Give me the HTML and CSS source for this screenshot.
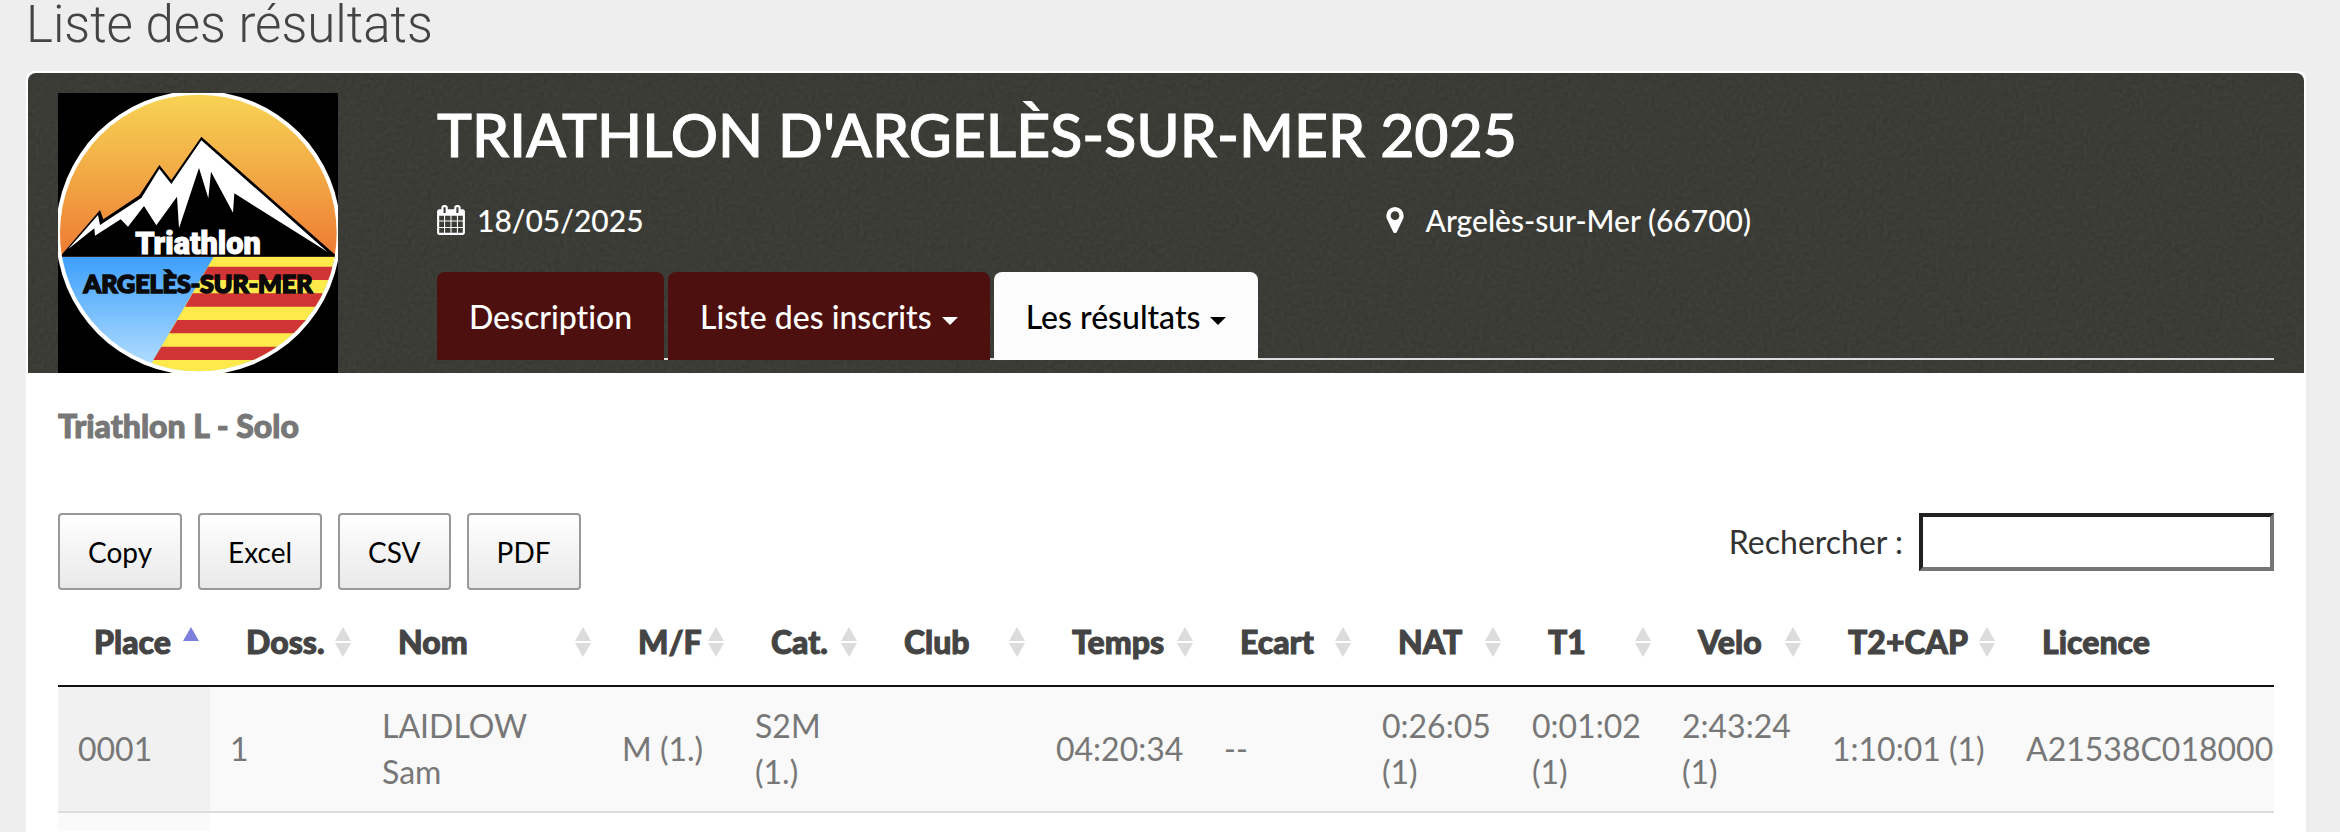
FILE: index.html
```
<!DOCTYPE html>
<html lang="fr">
<head>
    <meta charset="UTF-8">
    <meta name="viewport" content="width=device-width, initial-scale=1.0">
    <title>Liste des résultats</title>
    <link rel="stylesheet" href="styles.css">
</head>
<body>
    <h1 class="page-title">Liste des résultats</h1>

    <main class="panel">
        <!-- Bandeau de l'épreuve -->
        <header class="banner">
            <svg class="grain" aria-hidden="true">
                <filter id="noise">
                    <feTurbulence type="fractalNoise" baseFrequency="0.25" numOctaves="3"/>
                    <feColorMatrix type="matrix" values="0 0 0 0 0  0 0 0 0 0  0 0 0 0 0  0.5 0.5 0 0 -0.3"/>
                </filter>
                <rect width="100%" height="100%" filter="url(#noise)"/>
            </svg>

            <svg class="event-logo" viewBox="54 69 840 840" role="img" aria-label="Logo Triathlon Argelès-sur-Mer">
                <defs>
                    <linearGradient id="sky" x1="0" y1="0" x2="0" y2="1">
                        <stop offset="0" stop-color="#f8d454"/>
                        <stop offset="0.5" stop-color="#f2a945"/>
                        <stop offset="1" stop-color="#ee7a33"/>
                    </linearGradient>
                    <linearGradient id="sea" x1="0" y1="0" x2="0" y2="1">
                        <stop offset="0" stop-color="#3d9ffb"/>
                        <stop offset="1" stop-color="#b9e1ff"/>
                    </linearGradient>
                    <clipPath id="disc"><circle cx="475" cy="489" r="415"/></clipPath>
                </defs>
                <rect x="54" y="69" width="840" height="840" fill="#000"/>
                <circle cx="475" cy="489" r="427" fill="#fff"/>
                <g clip-path="url(#disc)">
                    <rect x="54" y="69" width="840" height="492" fill="url(#sky)"/>
                    <rect x="54" y="560" width="840" height="349" fill="url(#sea)"/>
                    <path d="M521 560H900V920H312z" fill="#feea4b"/>
                    <path d="M504 590H900V630H481zM458 670H900V710H435zM412 750H900V790H388zM364 830H900V870H340z" fill="#d13434"/>
                    <path d="M60 560L180 420L190 448L298 376L358 285L394 330L484 200L892 560z" fill="#000"/>
                    <path d="M84 538L174 435L180 465L304 384L358 296L394 342L484 211L862 545L583 370L579 428L513 305L505 385L477 294L417 475L411 380L349 466L312 408L264 470L242 448L165 497L163 475z" fill="#fff"/>
                </g>
                <text class="logo-name" x="474" y="551" text-anchor="middle">Triathlon</text>
                <text class="logo-city" x="474" y="668" text-anchor="middle">ARGELÈS-SUR-MER</text>
            </svg>

            <div class="event">
                <h2>TRIATHLON D'ARGELÈS-SUR-MER 2025</h2>
                <div class="event-info">
                    <p>
                        <svg class="icon-calendar" viewBox="0 0 1664 1792" aria-hidden="true"><path fill="#fff" d="M128 1664h288v-288H128v288zm352 0h320v-288H480v288zM128 1312h288V992H128v320zm352 0h320V992H480v320zM128 928h288V640H128v288zm736 736h320v-288H864v288zM480 928h320V640H480v288zm768 736h288v-288h-288v288zm-384-352h320V992H864v320zM512 448V160q0-13-9.500-22.500T480 128h-64q-13 0-22.500 9.500T384 160v288q0 13 9.500 22.500T416 480h64q13 0 22.500-9.500T512 448zm736 864h288V992h-288v320zM864 928h320V640H864v288zm384 0h288V640h-288v288zm32-480V160q0-13-9.500-22.500T1248 128h-64q-13 0-22.500 9.500T1152 160v288q0 13 9.500 22.500t22.500 9.500h64q13 0 22.500-9.500t9.500-22.500zm384-64v1280q0 52-38 90t-90 38H128q-52 0-90-38t-38-90V384q0-52 38-90t90-38h128v-96q0-66 47-113T416 0h64q66 0 113 47t47 113v96h384v-96q0-66 47-113t113-47h64q66 0 113 47t47 113v96h128q52 0 90 38t38 90z"/></svg>
                        18/05/2025
                    </p>
                    <p>
                        <svg class="icon-marker" viewBox="0 0 1024 1536" aria-hidden="true"><path fill="#fff" d="M768 512q0-106-75-181t-181-75-181 75-75 181 75 181 181 75 181-75 75-181zm256 0q0 109-33 179l-364 774q-16 33-47.500 52t-67.500 19-67.500-19-46.500-52L33 691Q0 621 0 512q0-212 150-362T512 0t362 150 150 362z"/></svg>
                        Argelès-sur-Mer (66700)
                    </p>
                </div>
                <nav class="tabs">
                    <a href="#description">Description</a>
                    <a href="#inscrits">Liste des inscrits <span class="caret"></span></a>
                    <a href="#resultats" class="active">Les résultats <span class="caret"></span></a>
                </nav>
            </div>
        </header>

        <!-- Résultats -->
        <section class="results" id="resultats">
            <h3>Triathlon L - Solo</h3>

            <div class="toolbar">
                <div class="buttons">
                    <button type="button">Copy</button>
                    <button type="button">Excel</button>
                    <button type="button">CSV</button>
                    <button type="button">PDF</button>
                </div>
                <div class="search">
                    <label for="search">Rechercher :</label>
                    <input type="search" id="search">
                </div>
            </div>

            <div class="table-wrap">
                <table>
                    <colgroup>
                        <col class="w-place">
                        <col class="w-place">
                        <col class="w-nom">
                        <col class="w-cat">
                        <col class="w-cat">
                        <col class="w-temps">
                        <col class="w-temps">
                        <col class="w-ecart">
                        <col class="w-split">
                        <col class="w-split">
                        <col class="w-split">
                        <col class="w-cap">
                        <col class="w-licence">
                    </colgroup>
                    <thead>
                        <tr>
                            <th class="asc">Place</th>
                            <th>Doss.</th>
                            <th>Nom</th>
                            <th>M/F</th>
                            <th>Cat.</th>
                            <th>Club</th>
                            <th>Temps</th>
                            <th>Ecart</th>
                            <th>NAT</th>
                            <th>T1</th>
                            <th>Velo</th>
                            <th>T2+CAP</th>
                            <th>Licence</th>
                        </tr>
                    </thead>
                    <tbody>
                        <tr>
                            <td>0001</td>
                            <td>1</td>
                            <td>LAIDLOW<br>Sam</td>
                            <td>M (1.)</td>
                            <td>S2M<br>(1.)</td>
                            <td></td>
                            <td>04:20:34</td>
                            <td>--</td>
                            <td>0:26:05<br>(1)</td>
                            <td>0:01:02<br>(1)</td>
                            <td>2:43:24<br>(1)</td>
                            <td>1:10:01 (1)</td>
                            <td>A21538C018000</td>
                        </tr>
                        <tr>
                            <td></td><td></td><td></td><td></td><td></td><td></td><td></td>
                            <td></td><td></td><td></td><td></td><td></td><td></td>
                        </tr>
                    </tbody>
                </table>
            </div>
        </section>
    </main>
</body>
</html>
```
FILE: styles.css
```
* {
    margin: 0;
    padding: 0;
    box-sizing: border-box;
}

body {
    display: flex;
    flex-direction: column;
    min-height: 100vh;
    background-color: #eee;
    font-family: Lato, sans-serif;
    font-size: 32px;
    font-variant-ligatures: none;
    line-height: 46px;
    color: #777;
}

.page-title {
    padding: 0 26px;
    margin-bottom: 21px;
    font-family: Roboto, sans-serif;
    font-size: 51px;
    font-weight: 300;
    line-height: 50px;
    color: #444;
}

.panel {
    flex: 1;
    margin: 0 34px 0 26px;
    border: 2px solid #fff;
    border-bottom: 0;
    border-radius: 8px 8px 0 0;
    background-color: #fff;
}

/* Bandeau */
.banner {
    position: relative;
    display: flex;
    gap: 99px;
    padding: 20px 30px 0;
    border-radius: 8px 8px 0 0;
    background-color: #3f403a;
    color: #fff;
    overflow: hidden;
}

.grain {
    position: absolute;
    inset: 0;
    width: 100%;
    height: 100%;
    opacity: 0.3;
}

.event-logo {
    position: relative;
    flex: none;
    width: 280px;
    height: 280px;
}

.logo-name {
    font-family: Roboto, sans-serif;
    font-size: 92px;
    font-weight: 900;
    fill: #fff;
    stroke: #fff;
    stroke-width: 3px;
}

.logo-city {
    font-size: 75px;
    font-weight: 900;
    fill: #0a0a0a;
    stroke: #0a0a0a;
    stroke-width: 5px;
}

.event {
    position: relative;
    flex: 1;
}

.event h2 {
    margin: 6px 0 26px;
    font-size: 59px;
    font-weight: 500;
    line-height: 72px;
    -webkit-text-stroke: 1px;
}

.event-info {
    display: grid;
    grid-template-columns: 1fr 1fr;
    gap: 60px;
    margin-bottom: 29px;
    font-size: 30px;
    font-weight: 500;
}

.event-info p {
    display: flex;
    align-items: center;
    gap: 12px;
}

.icon-calendar {
    width: 28px;
    height: 30px;
}

.icon-marker {
    width: 18px;
    height: 26px;
    margin-right: 10px;
}

.tabs {
    display: flex;
    gap: 4px;
    height: 88px;
    box-shadow: inset 0 -2px #ddd;
}

.tabs a {
    padding: 22px 32px 20px;
    border-radius: 8px 8px 0 0;
    background-color: #4e100e;
    color: #fff;
    font-size: 32px;
    font-weight: 500;
    text-decoration: none;
}

.tabs a.active {
    background-color: #fcfcfc;
    color: #000;
}

.caret {
    display: inline-block;
    margin-left: 2px;
    border: 8px solid transparent;
    border-top-color: currentColor;
    border-bottom: 0;
    vertical-align: middle;
}

/* Résultats */
.results {
    padding: 30px 30px 0;
}

.results h3 {
    margin-bottom: 64px;
    font-size: 32px;
    font-weight: 900;
    -webkit-text-stroke: 1px;
}

.toolbar {
    display: flex;
    justify-content: space-between;
    align-items: flex-start;
    margin-bottom: 9px;
}

.buttons {
    display: flex;
    gap: 16px;
}

.buttons button {
    height: 77px;
    padding: 0 28px;
    border: 2px solid #999;
    border-radius: 4px;
    background: linear-gradient(#fff, #e9e9e9);
    font-family: inherit;
    font-size: 28px;
    color: #000;
}

.search {
    display: flex;
    align-items: center;
    gap: 16px;
    color: #333;
}

.search input {
    width: 355px;
    height: 58px;
    border: 4px inset #767676;
    background-color: #fff;
    font: inherit;
}

.table-wrap {
    overflow: hidden;
}

table {
    width: 100%;
    min-width: 2240px;
    table-layout: fixed;
    border-collapse: separate;
    border-spacing: 0;
}

.w-place { width: 152px; }
.w-nom { width: 240px; }
.w-cat { width: 133px; }
.w-temps { width: 168px; }
.w-ecart { width: 158px; }
.w-split { width: 150px; }
.w-cap { width: 194px; }

th {
    position: relative;
    padding: 20px 36px;
    border-bottom: 2px solid #111;
    color: #444;
    font-weight: 900;
    text-align: left;
    white-space: nowrap;
    -webkit-text-stroke: 1px;
}

/* Flèches de tri */
th::before,
th::after {
    content: "";
    position: absolute;
    right: 11px;
    border: 8px solid transparent;
}

th::before {
    top: 28px;
    border-top: 0;
    border-bottom: 14px solid #dcdcdc;
}

th::after {
    top: 44px;
    border-bottom: 0;
    border-top: 14px solid #dcdcdc;
}

th.asc::before {
    border-bottom-color: #7c7fdc;
}

th.asc::after,
th:last-child::before,
th:last-child::after {
    display: none;
}

td {
    padding: 16px 20px;
    border-bottom: 2px solid #ddd;
    white-space: nowrap;
    vertical-align: middle;
}

td:empty {
    padding: 9px 20px;
}

tbody tr:last-child td {
    border-bottom: 0;
}

tbody tr:nth-child(odd) td {
    background-color: #f9f9f9;
}

tbody tr td:first-child {
    background-color: #fafafa;
}

tbody tr:nth-child(odd) td:first-child {
    background-color: #f1f1f1;
}
```
